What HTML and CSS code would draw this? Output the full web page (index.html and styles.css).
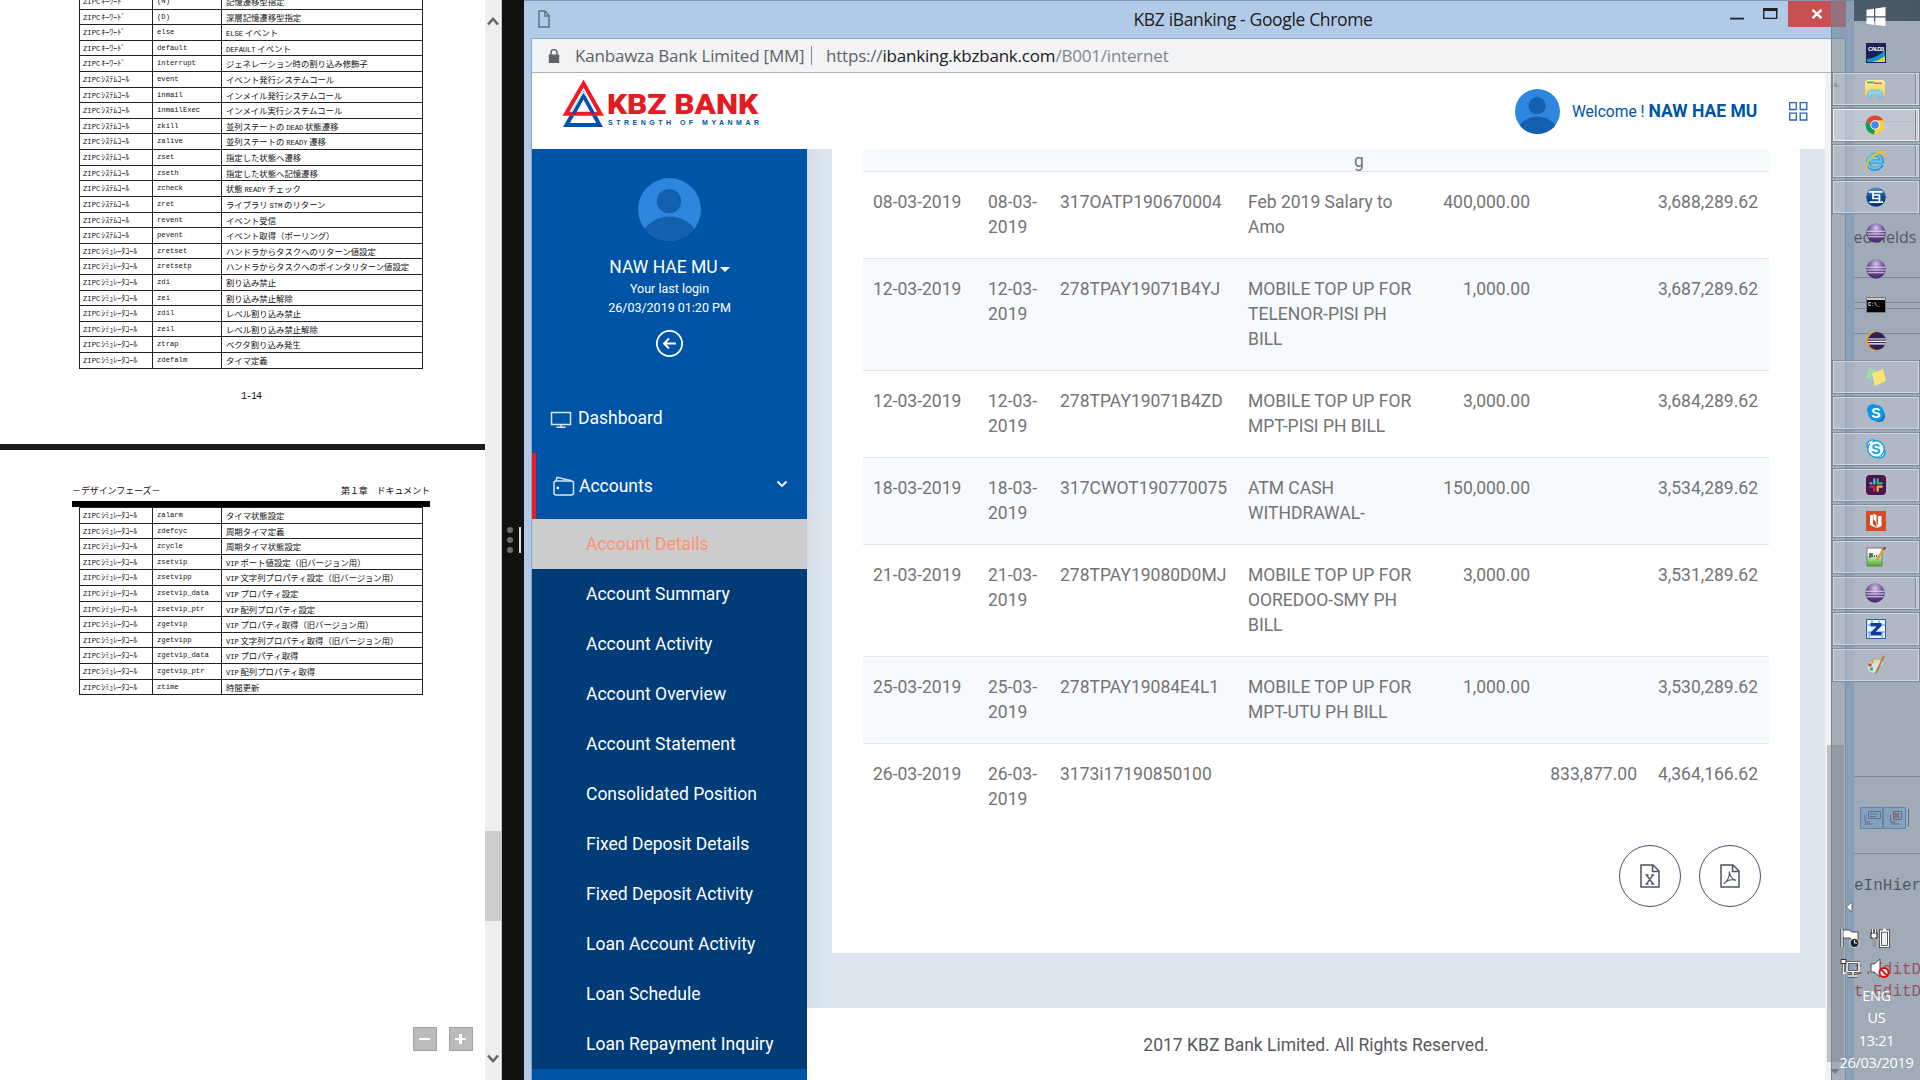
FILE: index.html
```html
<!DOCTYPE html>
<html lang="en">
<head>
<meta charset="utf-8">
<title>KBZ iBanking</title>
<link rel="stylesheet" href="styles.css">
</head>
<body>
<svg width="0" height="0" class="defs">
  <defs>
    <radialGradient id="purple" cx=".5" cy=".25" r=".8"><stop offset="0" stop-color="#d9c6e8"/><stop offset=".5" stop-color="#6d4d93"/><stop offset="1" stop-color="#3c2162"/></radialGradient>
    <linearGradient id="yellow" x2="0" y2="1"><stop offset="0" stop-color="#fdf0a8"/><stop offset="1" stop-color="#eac94f"/></linearGradient>
    <linearGradient id="navy" x2="0" y2="1"><stop offset="0" stop-color="#5b8fc9"/><stop offset=".5" stop-color="#0c4c94"/><stop offset="1" stop-color="#08366f"/></linearGradient>
    <linearGradient id="green" x2="0" y2="1"><stop offset=".3" stop-color="#fff"/><stop offset="1" stop-color="#3fae16"/></linearGradient>
    <symbol id="eclipse" viewBox="0 0 20 20"><circle cx="10" cy="10" r="9.7" fill="url(#purple)"/><path d="M1 8.2h18M1 11h18M1.6 13.8h16.8" stroke="#e6d9f0" stroke-width="1.1"/></symbol>
    <symbol id="avatar" viewBox="0 0 64 64"><clipPath id="round"><circle cx="32" cy="32" r="32"/></clipPath><g clip-path="url(#round)"><path d="M0 0h64v64H0z" fill="#2e86de"/><circle cx="31.5" cy="23.5" r="12.3" fill="#1260af"/><ellipse cx="32" cy="71" rx="32" ry="32" fill="#1260af"/></g></symbol>
  </defs>
</svg>
<div class="desktop">
  <section class="doc" lang="ja">
    <div class="sheet first">
      <div class="grid">
        <div class="r"><span>ZIPC<i>ｷｰﾜｰﾄﾞ</i></span><span>(N)</span><span class="j">記憶遷移型指定</span></div>
        <div class="r"><span>ZIPC<i>ｷｰﾜｰﾄﾞ</i></span><span>(D)</span><span class="j">深層記憶遷移型指定</span></div>
        <div class="r"><span>ZIPC<i>ｷｰﾜｰﾄﾞ</i></span><span>else</span><span class="j"><b>ELSE</b> イベント</span></div>
        <div class="r"><span>ZIPC<i>ｷｰﾜｰﾄﾞ</i></span><span>default</span><span class="j"><b>DEFAULT</b> イベント</span></div>
        <div class="r"><span>ZIPC<i>ｷｰﾜｰﾄﾞ</i></span><span>interrupt</span><span class="j">ジェネレーション時の割り込み修飾子</span></div>
        <div class="r"><span>ZIPC<i>ｼｽﾃﾑｺｰﾙ</i></span><span>event</span><span class="j">イベント発行システムコール</span></div>
        <div class="r"><span>ZIPC<i>ｼｽﾃﾑｺｰﾙ</i></span><span>inmail</span><span class="j">インメイル発行システムコール</span></div>
        <div class="r"><span>ZIPC<i>ｼｽﾃﾑｺｰﾙ</i></span><span>inmailExec</span><span class="j">インメイル実行システムコール</span></div>
        <div class="r"><span>ZIPC<i>ｼｽﾃﾑｺｰﾙ</i></span><span>zkill</span><span class="j">並列ステートの <b>DEAD</b> 状態遷移</span></div>
        <div class="r"><span>ZIPC<i>ｼｽﾃﾑｺｰﾙ</i></span><span>zalive</span><span class="j">並列ステートの <b>READY</b> 遷移</span></div>
        <div class="r"><span>ZIPC<i>ｼｽﾃﾑｺｰﾙ</i></span><span>zset</span><span class="j">指定した状態へ遷移</span></div>
        <div class="r"><span>ZIPC<i>ｼｽﾃﾑｺｰﾙ</i></span><span>zseth</span><span class="j">指定した状態へ記憶遷移</span></div>
        <div class="r"><span>ZIPC<i>ｼｽﾃﾑｺｰﾙ</i></span><span>zcheck</span><span class="j">状態 <b>READY</b> チェック</span></div>
        <div class="r"><span>ZIPC<i>ｼｽﾃﾑｺｰﾙ</i></span><span>zret</span><span class="j">ライブラリ <b>STM</b> のリターン</span></div>
        <div class="r"><span>ZIPC<i>ｼｽﾃﾑｺｰﾙ</i></span><span>revent</span><span class="j">イベント受信</span></div>
        <div class="r"><span>ZIPC<i>ｼｽﾃﾑｺｰﾙ</i></span><span>pevent</span><span class="j">イベント取得（ポーリング）</span></div>
        <div class="r"><span>ZIPC<i>ｼﾐｭﾚｰﾀｺｰﾙ</i></span><span>zretset</span><span class="j">ハンドラからタスクへのリターン値設定</span></div>
        <div class="r"><span>ZIPC<i>ｼﾐｭﾚｰﾀｺｰﾙ</i></span><span>zretsetp</span><span class="j">ハンドラからタスクへのポインタリターン値設定</span></div>
        <div class="r"><span>ZIPC<i>ｼﾐｭﾚｰﾀｺｰﾙ</i></span><span>zdi</span><span class="j">割り込み禁止</span></div>
        <div class="r"><span>ZIPC<i>ｼﾐｭﾚｰﾀｺｰﾙ</i></span><span>zei</span><span class="j">割り込み禁止解除</span></div>
        <div class="r"><span>ZIPC<i>ｼﾐｭﾚｰﾀｺｰﾙ</i></span><span>zdil</span><span class="j">レベル割り込み禁止</span></div>
        <div class="r"><span>ZIPC<i>ｼﾐｭﾚｰﾀｺｰﾙ</i></span><span>zeil</span><span class="j">レベル割り込み禁止解除</span></div>
        <div class="r"><span>ZIPC<i>ｼﾐｭﾚｰﾀｺｰﾙ</i></span><span>ztrap</span><span class="j">ベクタ割り込み発生</span></div>
        <div class="r"><span>ZIPC<i>ｼﾐｭﾚｰﾀｺｰﾙ</i></span><span>zdefalm</span><span class="j">タイマ定義</span></div>
      </div>
      <div class="pageno">1-14</div>
    </div>
    <div class="sheet">
      <div class="running"><span>－デザインフェーズ－</span><span>第１章　ドキュメント</span></div>
      <div class="grid">
        <div class="r"><span>ZIPC<i>ｼﾐｭﾚｰﾀｺｰﾙ</i></span><span>zalarm</span><span class="j">タイマ状態設定</span></div>
        <div class="r"><span>ZIPC<i>ｼﾐｭﾚｰﾀｺｰﾙ</i></span><span>zdefcyc</span><span class="j">周期タイマ定義</span></div>
        <div class="r"><span>ZIPC<i>ｼﾐｭﾚｰﾀｺｰﾙ</i></span><span>zcycle</span><span class="j">周期タイマ状態設定</span></div>
        <div class="r"><span>ZIPC<i>ｼﾐｭﾚｰﾀｺｰﾙ</i></span><span>zsetvip</span><span class="j"><b>VIP</b> ポート値設定（旧バージョン用）</span></div>
        <div class="r"><span>ZIPC<i>ｼﾐｭﾚｰﾀｺｰﾙ</i></span><span>zsetvipp</span><span class="j"><b>VIP</b> 文字列プロパティ設定（旧バージョン用）</span></div>
        <div class="r"><span>ZIPC<i>ｼﾐｭﾚｰﾀｺｰﾙ</i></span><span>zsetvip_data</span><span class="j"><b>VIP</b> プロパティ設定</span></div>
        <div class="r"><span>ZIPC<i>ｼﾐｭﾚｰﾀｺｰﾙ</i></span><span>zsetvip_ptr</span><span class="j"><b>VIP</b> 配列プロパティ設定</span></div>
        <div class="r"><span>ZIPC<i>ｼﾐｭﾚｰﾀｺｰﾙ</i></span><span>zgetvip</span><span class="j"><b>VIP</b> プロパティ取得（旧バージョン用）</span></div>
        <div class="r"><span>ZIPC<i>ｼﾐｭﾚｰﾀｺｰﾙ</i></span><span>zgetvipp</span><span class="j"><b>VIP</b> 文字列プロパティ取得（旧バージョン用）</span></div>
        <div class="r"><span>ZIPC<i>ｼﾐｭﾚｰﾀｺｰﾙ</i></span><span>zgetvip_data</span><span class="j"><b>VIP</b> プロパティ取得</span></div>
        <div class="r"><span>ZIPC<i>ｼﾐｭﾚｰﾀｺｰﾙ</i></span><span>zgetvip_ptr</span><span class="j"><b>VIP</b> 配列プロパティ取得</span></div>
        <div class="r"><span>ZIPC<i>ｼﾐｭﾚｰﾀｺｰﾙ</i></span><span>ztime</span><span class="j">時間更新</span></div>
      </div>
      <div class="zoomer">
        <button class="zbtn"><svg width="12" height="12"><path d="M0 6h11" stroke="#fff" stroke-width="2"/></svg></button>
        <button class="zbtn"><svg width="12" height="12"><path d="M0 6h11" stroke="#fff" stroke-width="2"/><path d="M5.5 1v10" stroke="#fff" stroke-width="3"/></svg></button>
      </div>
    </div>
  </section>
  <div class="docbar">
    <svg width="16" height="12"><path d="M3 9.5 8 4l5 5.5" fill="none" stroke="#666" stroke-width="2.6"/></svg>
    <div class="docthumb"></div>
    <svg width="16" height="12"><path d="M3 2.5 8 8l5-5.5" fill="none" stroke="#666" stroke-width="2.6"/></svg>
  </div>
  <div class="splitter"><div class="dots"><u></u><u></u><u></u></div><div class="grip"></div></div>

  <section class="chrome">
    <div class="titlebar">
      <svg class="page" width="12" height="18" viewBox="0 0 12 18"><path d="M1 1h6l4 4.500V17H1z" fill="none" stroke="#61707f" stroke-width="1.500"/><path d="M6.800 1v5H11" fill="none" stroke="#61707f" stroke-width="1.300"/></svg>
      <span class="title">KBZ iBanking - Google Chrome</span>
      <svg class="ctl" width="50" height="14"><path d="M1 12.500h14v-1.800H1z" fill="#222"/><path d="M34.700 2.200h13v9.200h-13z" fill="none" stroke="#222" stroke-width="1.400"/><path d="M34 1h14.500v3H34z" fill="#222"/></svg>
      <div class="close"><svg width="12" height="10"><path d="m1.500.8 9 8.400m0-8.400-9 8.400" stroke="#fff" stroke-width="2.300"/></svg></div>
    </div>
    <div class="frame">
      <div class="address">
        <svg width="12" height="14" viewBox="0 0 12 14"><path d="M.8 5.500h10.400V14H.8z" fill="#5f6368"/><path d="M3 6V3.600a3 3 0 0 1 6 0V6" fill="none" stroke="#5f6368" stroke-width="1.500"/></svg>
        <span class="org">Kanbawza Bank Limited [MM]</span><span class="bar"></span>
        <span class="url">https://<em>ibanking.kbzbank.com</em><small>/B001/internet</small></span>
      </div>
      <div class="view">
        <div class="site">
          <header class="top">
            <svg class="logo" width="200" height="52" viewBox="0 0 200 52">
              <path d="M21.500 16 4.500 46h33z" fill="none" stroke="#0054a6" stroke-width="4"/>
              <path d="M21.500 4.500 4 34.800h34.500z" fill="none" stroke="#ed1c24" stroke-width="4"/>
              <path d="M21.500 13 10 33" stroke="#fff" stroke-width="1"/><path d="M21.500 13 33 33" stroke="#fff" stroke-width="1"/>
              <path d="M21.500 17 11.500 35M21.500 17l10 18" stroke="#0054a6" stroke-width="3.400"/>
              <text x="45" y="35" class="brand" textLength="151" lengthAdjust="spacingAndGlyphs">KBZ BANK</text>
              <text x="46" y="46" class="tag" textLength="151">STRENGTH OF MYANMAR</text>
            </svg>
            <svg class="face" width="45" height="45"><use href="#avatar"/></svg>
            <span class="hello">Welcome ! <strong>NAW HAE MU</strong></span>
            <svg class="apps" width="19" height="19"><path d="M.7.700h6.600v6.800H.7zM11.200.700h6.600v6.800h-6.600zM.7 11.200h6.600V18H.7zM11.200 11.200h6.600V18h-6.600z" fill="none" stroke="#2a61ad" stroke-width="1.300"/></svg>
          </header>
          <div class="body">
            <nav class="side">
              <div class="me">
                <svg width="63" height="63"><use href="#avatar"/></svg>
                <div class="name">NAW HAE MU<span class="caret"></span></div>
                <div class="last">Your last login</div>
                <div class="last">26/03/2019 01:20 PM</div>
                <svg class="back" width="27" height="27"><circle cx="13.500" cy="13.500" r="12.600" fill="none" stroke="#fff" stroke-width="1.800"/><path d="M20 13.500H8m5-5-5 5 5 5" fill="none" stroke="#fff" stroke-width="1.900"/></svg>
              </div>
              <div class="item dash"><svg width="22" height="18"><path d="M1.500 1.500h19v12h-19zM11 13.500V16M6.500 16.300h9" fill="none" stroke="#d7e6f5" stroke-width="1.500"/></svg>Dashboard</div>
              <div class="item acc"><svg width="22" height="20"><rect x="1" y="5" width="19.500" height="14" rx="2" fill="none" stroke="#d7e6f5" stroke-width="1.500"/><path d="M3 5 4 1.300 18.500 4.700" fill="none" stroke="#d7e6f5" stroke-width="1.500"/><circle cx="4.800" cy="12" r="1.400" fill="#fff"/></svg>Accounts<svg class="chev" width="12" height="8"><path d="m1.500 1.500 4.500 4.500 4.500-4.500" fill="none" stroke="#fff" stroke-width="1.800"/></svg></div>
              <ul class="sub">
                <li class="on">Account Details</li><li>Account Summary</li><li>Account Activity</li><li>Account Overview</li><li>Account Statement</li><li>Consolidated Position</li><li>Fixed Deposit Details</li><li>Fixed Deposit Activity</li><li>Loan Account Activity</li><li>Loan Schedule</li><li>Loan Repayment Inquiry</li>
              </ul>
            </nav>
            <main class="main">
              <div class="card">
                <div class="rows">
                  <div class="t cut"><span></span><span></span><span></span><span class="tail">g</span></div>
                  <div class="t"><span>08-03-2019</span><span>08-03-<br>2019</span><span>317OATP190670004</span><span>Feb 2019 Salary to<br>Amo</span><span>400,000.00</span><span></span><span>3,688,289.62</span></div>
                  <div class="t alt"><span>12-03-2019</span><span>12-03-<br>2019</span><span>278TPAY19071B4YJ</span><span>MOBILE TOP UP FOR<br>TELENOR-PISI PH<br>BILL</span><span>1,000.00</span><span></span><span>3,687,289.62</span></div>
                  <div class="t"><span>12-03-2019</span><span>12-03-<br>2019</span><span>278TPAY19071B4ZD</span><span>MOBILE TOP UP FOR<br>MPT-PISI PH BILL</span><span>3,000.00</span><span></span><span>3,684,289.62</span></div>
                  <div class="t alt"><span>18-03-2019</span><span>18-03-<br>2019</span><span>317CWOT190770075</span><span>ATM CASH<br>WITHDRAWAL-</span><span>150,000.00</span><span></span><span>3,534,289.62</span></div>
                  <div class="t"><span>21-03-2019</span><span>21-03-<br>2019</span><span>278TPAY19080D0MJ</span><span>MOBILE TOP UP FOR<br>OOREDOO-SMY PH<br>BILL</span><span>3,000.00</span><span></span><span>3,531,289.62</span></div>
                  <div class="t alt"><span>25-03-2019</span><span>25-03-<br>2019</span><span>278TPAY19084E4L1</span><span>MOBILE TOP UP FOR<br>MPT-UTU PH BILL</span><span>1,000.00</span><span></span><span>3,530,289.62</span></div>
                  <div class="t"><span>26-03-2019</span><span>26-03-<br>2019</span><span>3173i17190850100</span><span></span><span></span><span>833,877.00</span><span>4,364,166.62</span></div>
                </div>
                <div class="export">
                  <div class="round"><svg width="20" height="24"><path d="M1 1h12l6 6v16H1zM12.500 1v6.500H19" fill="none" stroke="#4c5566" stroke-width="1.500"/><path d="m6.500 11 6.500 9m0-9-6.500 9M5.500 11h3m2.700 0h3M5.500 20h3m2.700 0h3" stroke="#4c5566" stroke-width="1.300"/></svg></div>
                  <div class="round"><svg width="20" height="24"><path d="M1 1h12l6 6v16H1zM12.500 1v6.500H19" fill="none" stroke="#4c5566" stroke-width="1.500"/><path d="M9.300 7.500c.5 5 2.500 7.500 6.700 8.800-4-1-7.500-.5-9.800 1.200-1.500 1.200-2 2.300-2.700 2.600M9.300 8c.3 4-1.200 7.500-3.300 10" fill="none" stroke="#4c5566" stroke-width="1.100"/></svg></div>
                </div>
              </div>
              <footer>2017 KBZ Bank Limited. All Rights Reserved.</footer>
            </main>
          </div>
        </div>
        <div class="scroll"><span class="up"></span><div class="thumb"></div><span class="down"></span></div>
      </div>
    </div>
  </section>

  <section class="ide">
    <div class="dark"></div>
    <div class="pane p1"></div><div class="pane p2">red fields a</div><div class="pane p3"></div><div class="pane p4"></div><div class="pane p5"></div><div class="pane p6"></div>
    <div class="tools"><svg width="66" height="23"><path d="M6.500.500h22v21h-22zM29.500.500h22v21h-22z" fill="#a8cdf4" stroke="#3b8ae0"/><g fill="none" stroke="#334f80"><path d="M14.500 4.500h12v7h-12zM11 8v7h5M16 7h8M16 9.500h6M11 17h8"/><path d="M36.500 8v7h5M37 17h8"/><path d="M39.500 4.500h8v8h-8z"/></g><path d="m40 6 5 5m0-5-5 5" stroke="#d22" stroke-width="2"/><path d="M54.500 2v18" stroke="#555"/></svg></div>
    <div class="code">eInHier</div>
    <div class="code red">t.EditD<br>t.EditD</div>
  </section>

  <aside class="taskbar">
    <div class="slot"><svg width="20" height="20"><path d="M.5 2.800 8 1.700v7.500H.5zM9.300 1.500 19.500 0v9.200H9.300zM.5 10.400H8v7.500L.5 16.800zM9.300 10.400h10.200V19L9.300 17.900z" fill="#fff"/></svg></div>
    <div class="slot"><svg width="20" height="20"><path d="M0 0h20v20H0z" fill="#1b2253"/><path d="M1 16C8 15 14 12 19 7v12H1z" fill="#1593c9"/><path d="M6 19c5-1 9-3 13-6v6z" fill="#d8e021"/><text x="2" y="7.500" class="cald" textLength="16">CALD3</text></svg></div>
    <div class="slot box stack"><svg width="20" height="20"><path d="M0 3 2 1h16l2 2v14H0z" fill="url(#yellow)"/><path d="M2 2.500h7v1.800H2z" fill="#4caf50"/><path d="M9 3.500h8v1.500H9z" fill="#d3704f"/><path d="M3 19v-6l2-2h10l2 2v6h-3v-3H6v3z" fill="#8fd3f2" stroke="#5aa5cf" stroke-width=".6"/></svg></div>
    <div class="slot box stack lit"><svg width="20" height="20" viewBox="0 0 20 20"><circle cx="10" cy="10" r="9.500" fill="#ffcd40"/><path d="M1.800 5.200A9.500 9.500 0 0 1 18.200 5.300H10L6 12z" fill="#db4437"/><path d="M1.800 5.200 6.500 12.500 10 14.500 9 19.400A9.500 9.500 0 0 1 1.800 5.200z" fill="#0f9d58"/><circle cx="10" cy="10" r="4.700" fill="#fff"/><circle cx="10" cy="10" r="3.800" fill="#4285f4"/></svg></div>
    <div class="slot box stack"><svg width="20" height="20"><path d="M16.500 13.500A7 7 0 1 1 17 10.500H5" fill="none" stroke="#1b8fd0" stroke-width="4"/><path d="M16 13A7 7 0 1 1 16.500 10.500H5" fill="none" stroke="#5cc8f2" stroke-width="2.300"/><path d="M2 18C-2 13 12-1 18.500 2c1 .8.800 2 .2 3.500" fill="none" stroke="#f2c21b" stroke-width="1.900"/></svg></div>
    <div class="slot box"><svg width="20" height="20"><circle cx="10" cy="10" r="9.800" fill="url(#navy)"/><path d="M3 4.800h13.500M7 5v6.500h7.500M13.500 8v7.200H3.500M17 15.200h-3M7 8h7" fill="none" stroke="#fff" stroke-width="1.700"/></svg></div>
    <div class="slot"><svg width="20" height="20"><use href="#eclipse"/></svg></div>
    <div class="slot"><svg width="20" height="20"><use href="#eclipse"/></svg></div>
    <div class="slot"><svg width="20" height="16"><path d="M.5.500h19v15H.5z" fill="#050505" stroke="#777"/><path d="M1 1h18v2H1z" fill="#ccc"/><text x="2" y="9" class="cmd">C:\_</text></svg></div>
    <div class="slot"><svg width="20" height="20"><circle cx="9.500" cy="10" r="9.500" fill="#f7941e"/><circle cx="11" cy="10" r="9" fill="#2c2255"/><path d="M2.500 8h17M2 10.400h18M2.500 12.800h17" stroke="#fff" stroke-width="1.200"/></svg></div>
    <div class="slot box"><svg width="20" height="20"><path d="m3 1 7 2-3 10-7-2z" fill="#a8dd92"/><path d="m5 4 9 1-1 10-9-2z" fill="#8cc7ee"/><path d="m6 6 11-4 3 12-11 5z" fill="#fbe570"/></svg></div>
    <div class="slot box"><svg width="20" height="20"><rect x="1" y="1" width="12" height="12" rx="6" fill="#0a8fdc"/><rect x="7" y="7" width="12" height="12" rx="5.500" fill="#0a78d4"/><circle cx="10" cy="10" r="8" fill="#0c9ae6"/><text x="10" y="15" class="sk" fill="#fff">S</text></svg></div>
    <div class="slot box"><svg width="20" height="20"><g fill="#fff" stroke="#12a5e8" stroke-width="1.500"><circle cx="6.500" cy="6.500" r="5.500"/><circle cx="13.500" cy="13.500" r="5.500"/><circle cx="10" cy="10" r="8.200"/></g><path d="M3 3.500 6 2l9 14-3 2z" fill="#fff"/><text x="10" y="15" class="sk" fill="#12a5e8">S</text></svg></div>
    <div class="slot box"><svg width="20" height="20"><rect width="20" height="20" rx="4" fill="#4a154b"/><g stroke-width="2.300" stroke-linecap="round"><path d="M8.300 4.500v4M4.500 8.300h1" stroke="#36c5f0"/><path d="M11.700 4.500v4M11.700 8.300h4" stroke="#2eb67d"/><path d="M11.700 11.700v4M11.700 11.700h4" stroke="#ecb22e"/><path d="M8.300 11.700v4M4.500 11.700h4" stroke="#e01e5a"/></g></svg></div>
    <div class="slot box"><svg width="20" height="20"><path d="M0 0h20v20H0z" fill="#d64a26"/><path d="M4 4h3v9l3 3v-5L7.500 8.500V2.500l3 2v12.500L4 14zM12 5h3.500v10L11 17v-3l1-1z" fill="#fff"/></svg></div>
    <div class="slot box"><svg width="20" height="20"><path d="M1 1h15v18H1z" fill="url(#green)" stroke="#777"/><path d="M4 6v5M6 6v4M8 9h1M10 9h1" stroke="#222" stroke-width="1.300"/><path d="m18 1-7 12" stroke="#e29a34" stroke-width="2.300"/><path d="m19 0-1.500 2.500" stroke="#a33" stroke-width="2.500"/></svg></div>
    <div class="slot box stack"><svg width="20" height="20"><use href="#eclipse"/></svg></div>
    <div class="slot box"><svg width="20" height="20"><path d="M.5.500h19v19H.5z" fill="#eef4fb" stroke="#1d5c9c"/><path d="M0 6h20M0 13h20M6 0v5M13 0v5M3 13v7M16 13v7" stroke="#5b92c6"/><path d="M4.500 4h11v3l-6 6h6v3.500h-11v-3l6-6h-6z" fill="#123e9a"/></svg></div>
    <div class="slot box"><svg width="20" height="20"><path d="M1 12C1 6 9 2 15 5c5 3 2 6-1 7s-1 5-5 6-8-2-8-6z" fill="#cfe5f4" stroke="#7ea8c7" stroke-width=".8"/><circle cx="4" cy="10" r="1.700" fill="#d33"/><circle cx="6.500" cy="6.800" r="1.700" fill="#f3a02c"/><circle cx="11" cy="5.800" r="1.700" fill="#f5d431"/><circle cx="5.500" cy="14" r="1.700" fill="#4a4"/><path d="m18 1-8 17" stroke="#c9792e" stroke-width="2"/></svg></div>
    <div class="tray">
      <svg class="more" width="8" height="12"><path d="M7 .8v10.400L1.300 6z" fill="#fff" stroke="#5a6a7c"/></svg>
      <div class="icons">
        <svg width="20" height="20"><path d="M2 1v18" stroke="#333" stroke-width="3"/><path d="M3 2h7l1.500 2H18v8h-6l-2-2H3z" fill="#fff" stroke="#333" stroke-width=".8"/><path d="M2 1v18" stroke="#fff" stroke-width="1.400"/><circle cx="14.500" cy="15" r="4.500" fill="#222" stroke="#fff" stroke-width=".8"/><path d="M14.500 12v3h2.500" fill="none" stroke="#fff"/></svg>
        <svg width="20" height="20"><path d="M10.500 3h8v15.500h-8z" fill="#eef1f4" stroke="#333" stroke-width="3"/><path d="M10.500 3h8v15.500h-8zM13 1.500h3" fill="none" stroke="#fff" stroke-width="1.400"/><path d="M2.500 1v4M5.500 1v4M1.500 5.500h5v4h-5zM4 9v10" fill="#fff" stroke="#333" stroke-width="2.200"/><path d="M2.500 1v4M5.500 1v4M2 6h4v3H2zM4 9v10" fill="#fff" stroke="#fff"/></svg>
        <svg width="20" height="20"><g fill="none" stroke="#333" stroke-width="3"><path d="M7 4.500h12v9H7zM13 13v4M8 18h10M3.500 6v9"/></g><g fill="none" stroke="#fff" stroke-width="1.600"><path d="M7 4.500h12v9H7zM13 13v4M8 18h10M3.500 6v9h3"/></g><path d="M1 1.500h5v4H1z" fill="#fff" stroke="#333"/></svg>
        <svg width="20" height="20"><path d="M1 6h3l6-5v18l-6-5H1z" fill="#fff" stroke="#444"/><circle cx="14" cy="14.500" r="4.500" fill="#fff" stroke="#e80c0c" stroke-width="2"/><path d="m11 11.500 6 6" stroke="#e80c0c" stroke-width="2"/></svg>
      </div>
      <div class="clock">ENG</div><div class="clock">US</div><div class="clock time">13:21</div><div class="clock">26/03/2019</div>
    </div>
  </aside>
</div>
</body>
</html>
```
FILE: styles.css
```css
* { box-sizing: border-box; }
body { margin: 0; overflow: hidden; font-family: Roboto, "Liberation Sans", sans-serif; }
.defs { position: absolute; }
svg { flex: none; display: block; }
.desktop { position: relative; display: flex; width: 1920px; height: 1080px; overflow: hidden; background: #111; }

/* PDF reader */
.doc { width: 485px; background: #fff; overflow: hidden; color: #111; }
.sheet { display: flex; flex-direction: column; height: 630px; padding-left: 72px; }
.sheet.first { height: 450px; border-bottom: 6px solid #1c1c1c; }
.first .grid { margin-top: -7px; }
.grid { display: grid; grid-auto-rows: 15.61px; width: 344px; flex: none; margin-left: 7px; border: 1px solid #222; border-bottom: 0; font-family: "Liberation Mono", monospace; font-size: 7.2px; line-height: 14px; }
.r { display: grid; grid-template-columns: 72px 69px 1fr; border-bottom: 1px solid #222; white-space: nowrap; }
.r > span { padding-left: 4px; border-left: 1px solid #222; }
.r > span:first-child { padding-left: 3px; border-left: 0; }
.r i { font: 8px/14px "Noto Sans CJK JP", sans-serif; margin-left: 1px; }
.r .j { font: 8.35px/14px "Noto Sans CJK JP", sans-serif; }
.r b { font: 7.2px "Liberation Mono", monospace; letter-spacing: -.1px; }
.pageno { width: 358px; margin-top: 20px; text-align: center; font: 10px/16px "Liberation Mono", monospace; letter-spacing: -1px; }
.running { display: flex; justify-content: space-between; width: 358px; height: 57px; padding-top: 33px; border-bottom: 6px solid #000; font: 9px/16px "Noto Sans CJK JP", sans-serif; letter-spacing: -.1px; }
.zoomer { display: flex; gap: 12px; margin: auto 0 29px 341px; }
.zbtn { display: flex; align-items: center; justify-content: center; width: 24px; height: 24px; padding: 0; border: 1px solid #a3a3a3; background: #bbb; }
.docbar { display: flex; flex-direction: column; align-items: center; width: 17px; padding: 15px 0; background: #efefef; border-right: 1px solid #c4c4c4; }
.docthumb { width: 16px; height: 90px; margin: 804px 0 132px; background: #cdcdcd; }
.splitter { display: flex; align-items: center; justify-content: flex-end; gap: 6px; width: 22px; padding: 0 3px 0 0; background: #111; }
.dots { display: grid; gap: 4px; }
.dots u { width: 6px; height: 6px; border-radius: 50%; background: #6e6e6e; }
.grip { width: 2px; height: 26px; background: #ddd; }

/* browser window */
.chrome { display: flex; flex-direction: column; width: 1330px; background: #b0cae8; border-top: 1px solid #8497b3; }
.titlebar { display: flex; align-items: flex-start; height: 37px; padding-left: 14px; }
.page { margin-top: 9px; }
.title { flex: 1; margin-left: 5px; padding-left: 222px; text-align: center; font: 17.5px/37px "Open Sans", sans-serif; letter-spacing: -.35px; color: #1d1d1d; white-space: nowrap; }
.ctl { margin: 6px 9px 0 0; }
.close { display: flex; align-items: center; justify-content: center; width: 58px; height: 26px; margin-right: 8px; background: #c75050; }
.frame { flex: 1; display: flex; flex-direction: column; margin: 0 8px 0 7px; border: 1px solid #8aa6c8; border-bottom: 0; border-right-color: #94a9c3; background: #fff; }
.address { display: flex; align-items: center; height: 34px; padding-left: 16px; background: #f1f3f4; border-bottom: 1px solid #b0b0b0; font: 17px/33px "Open Sans", sans-serif; color: #5f6368; }
.org { width: 227px; margin-left: 15px; letter-spacing: -.2px; white-space: nowrap; }
.bar { width: 1px; height: 19px; margin: 0 14px 0 9px; background: #888; }
.url em { font-style: normal; color: #1b1b1b; }
.url { letter-spacing: -.2px; }
.url small { font-size: inherit; color: #80868b; }
.view { flex: 1; display: flex; }
.site { width: 1293px; }
.top { display: flex; align-items: center; height: 76px; padding-left: 30px; }
.logo { margin: 0 753px 12px 0; }
.brand { font: 900 27px Roboto, sans-serif; fill: #e31b23; }
.tag { font: bold 7px "Liberation Sans", sans-serif; fill: #0054a6; }
.hello { width: 182px; margin-left: 12px; font-size: 15.6px; color: #0054a6; white-space: nowrap; }
.hello strong { font-size: 17.5px; font-weight: 700; }
.apps { margin-left: 35px; }
.body { display: flex; height: 931px; }
.side { width: 275px; background: #0054a6; color: #fff; font-size: 17.5px; }
.me { display: flex; flex-direction: column; align-items: center; height: 237px; padding-top: 29px; }
.name { display: flex; align-items: center; margin-top: 14px; line-height: 25px; }
.caret { margin: 3px 0 0 2px; border: 5px solid transparent; border-top-color: #fff; border-bottom: 0; }
.last { font-size: 12.5px; line-height: 19px; }
.me .name + .last { margin-top: -1px; }
.back { margin-top: 13px; }
.item { display: flex; align-items: center; height: 67px; padding-left: 17px; }
.dash { gap: 6px; padding-bottom: 3px; padding-left: 18px; height: 67px; }
.dash svg { margin-top: 3px; }
.acc { gap: 4px; height: 66px; border-left: 4px solid #ed1c24; }
.chev { margin: 0 19px 5px auto; }
.sub { margin: 0; padding: 0; list-style: none; background: #003c78; }
.sub li { height: 50px; padding-left: 54px; line-height: 50px; }
.sub .on { background: #ccc; color: #fd9277; }
.main { width: 1018px; background: linear-gradient(90deg, #d6dfe9, #dce6f0 18px); }
.card { width: 968px; height: 804px; margin: 0 25px 55px; padding: 0 31px; background: #fff; }
.rows { color: #747474; font-size: 17.5px; line-height: 25px; }
.t { display: grid; grid-template-columns: 115px 72px 188px 192px 110px 107px 121px; padding: 18px 0; border-bottom: 1px solid #dfe6eb; white-space: nowrap; }
.t span { padding: 0 10px; }
.t span:nth-child(n+5) { text-align: right; }
.t:last-child { border: 0; }
.alt, .cut { background: #f6fafd; }
.cut { height: 23px; padding: 0; overflow: hidden; align-items: end; }
.cut .tail { padding-left: 116px; margin-bottom: 18px; }
.export { display: flex; justify-content: flex-end; gap: 18px; padding: 15px 8px 0; }
.round { display: flex; align-items: center; justify-content: center; width: 62px; height: 62px; border: 1px solid #4c5270; border-radius: 50%; }
footer { height: 72px; background: #fff; text-align: center; font-size: 17.5px; line-height: 75px; color: #58595b; }
.scroll { display: flex; flex-direction: column; align-items: center; width: 21px; background: #f1f1f1; }
.thumb { width: 17px; height: 317px; margin: 658px 0 7px; background: #c1c1c1; }
.up, .down { border: 5px solid transparent; }
.up { margin: 4px 0 0; border-bottom-color: #777; }
.down { border-top-color: #777; }

/* window behind the taskbar */
.ide { width: 66px; overflow: hidden; background: #e6e9ea; color: #111; white-space: nowrap; }
.dark { height: 21px; background: linear-gradient(90deg, #0b1f22, #04100f); }
.pane { border-bottom: 1px solid #8a939c; }
.p1 { height: 101px; border-color: #bbb; }
.p2 { height: 156px; padding-top: 104px; font: 16px/22px "Open Sans", sans-serif; text-indent: -7px; }
.p3 { height: 25px; }
.p4 { height: 6px; }
.p5 { height: 25px; }
.p6 { height: 443px; }
.tools { height: 77px; padding-top: 30px; border-bottom: 1px solid #999; }
.code { padding-top: 21px; font: 16px/22px "Liberation Mono", monospace; }
.red { padding-top: 62px; color: #c00; }

/* vertical taskbar, overlaid on the windows */
.taskbar { position: absolute; top: 0; right: 0; display: flex; flex-direction: column; gap: 2px; width: 89px; height: 1080px; border-left: 1px solid #75859a; background: rgba(115, 132, 152, .62); }
.slot { flex: none; display: flex; align-items: center; justify-content: center; height: 34px; }
.box { border: 1px solid #7e8b99; box-shadow: inset 0 0 0 1px rgba(225, 232, 240, .65); background: rgba(200, 206, 214, .4); }
.stack { padding-right: 3px; background: linear-gradient(90deg, transparent 82px, #7e8b99 82px 83px, rgba(225, 232, 240, .6) 83px 84px, transparent 84px), rgba(200, 206, 214, .4); }
.lit { background-color: rgba(225, 228, 235, .5); box-shadow: inset 0 0 0 1px #eef1f5; }
.cald { font: bold 6px "Liberation Sans", sans-serif; fill: #fff; }
.cmd { font: bold 5px "Liberation Mono", monospace; fill: #fff; }
.sk { font: bold 14px "Liberation Sans", sans-serif; text-anchor: middle; }
.tray { margin-top: 217px; color: #fff; }
.more { margin-left: 13px; }
.icons { display: grid; grid-template-columns: 20px 20px; gap: 10px; margin: 15px 0 7px 8px; }
.clock { width: 89px; text-align: center; font: 14.5px/21.5px "Open Sans", sans-serif; letter-spacing: -.3px; }
.time { margin-top: 2px; }
```
